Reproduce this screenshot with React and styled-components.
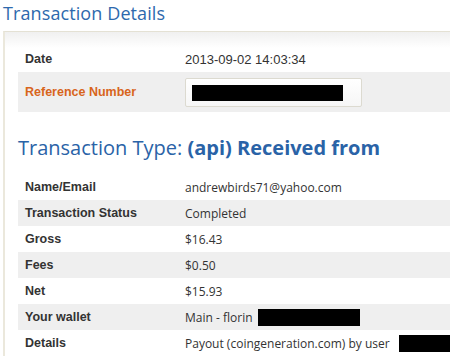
import React from 'react'
import styled, { createGlobalStyle } from 'styled-components'

const GlobalStyle = createGlobalStyle`
    html, body { margin: 0; padding: 0; background: #fff; overflow: hidden; }
    body { width: 450px; height: 357px; }
`
const Page = styled.div`
    width: 450px;
    height: 357px;
    overflow: hidden;
    padding: 0 0 0 3px;
    box-sizing: border-box;
`
const Title = styled.h1`
    margin: 0;
    height: 31px;
    font-family: "Open Sans", sans-serif;
    font-weight: 400;
    font-size: 18px;
    line-height: 26px;
    color: #2d69ad;
    letter-spacing: 0.1px;
`
const Panel = styled.div`
    width: 520px;
    border-top: 1px solid #e4e1d4;
    border-left: 2px solid #ebe8dc;
    background: linear-gradient(#f0f0f0, #ffffff 16px);
    padding: 14px 0 0 13px;
    box-sizing: border-box;
`
const Table = styled.div`
    display: flex;
    flex-direction: column;
`
const Row = styled.div`
    display: grid;
    grid-template-columns: 160px 1fr;
    align-items: center;
    height: ${p => p.tall ? 40 : 26}px;
    padding-left: 7px;
    background: ${p => p.shade ? '#efefef' : 'transparent'};
`
const Label = styled.div`
    font-family: "Liberation Sans", Arial, sans-serif;
    font-weight: bold;
    font-size: 12.5px;
    color: ${p => p.accent ? '#d8651c' : '#333'};
`
const Value = styled.div`
    font-family: ${p => p.plain ? '"Liberation Sans", Arial' : '"Open Sans"'}, sans-serif;
    font-size: ${p => p.plain ? 13 : 12}px;
    color: #333;
    white-space: nowrap;
    display: flex;
    align-items: center;
`
const InputBox = styled.div`
    width: 177px;
    height: 29px;
    box-sizing: border-box;
    border: 1px solid #dcdad0;
    background: linear-gradient(#ffffff, #f6f6f6);
    border-radius: 2px;
    padding: 6px 0 0 6px;
`
const Redact = styled.span`
    display: inline-block;
    background: #000;
    width: ${p => p.w}px;
    height: ${p => p.h}px;
    margin-left: ${p => p.shift || 0}px;
`
const Heading = styled.h2`
    margin: 0;
    padding: 22px 0 0 0;
    height: 62px;
    box-sizing: border-box;
    font-family: "Open Sans", sans-serif;
    font-weight: 400;
    font-size: 20px;
    line-height: 28px;
    color: #2a63a7;
    & b { font-weight: 700; }
`

const rows = [
    ['Name/Email', 'andrewbirds71@yahoo.com'],
    ['Transaction Status', 'Completed'],
    ['Gross', '$16.43'],
    ['Fees', '$0.50'],
    ['Net', '$15.93'],
]

const App = () => {
    return (
        <Page>
            <GlobalStyle />
            <Title>Transaction Details</Title>
            <Panel>
                <Table>
                    <Row>
                        <Label>Date</Label>
                        <Value plain>2013-09-02 14:03:34</Value>
                    </Row>
                    <Row tall shade>
                        <Label accent>Reference Number</Label>
                        <InputBox><Redact w={151} h={16} /></InputBox>
                    </Row>
                </Table>
                <Heading>Transaction Type: <b>(api) Received from</b></Heading>
                <Table>
                    {rows.map((r, i) => (
                        <Row key={r[0]} shade={i % 2 === 1}>
                            <Label>{r[0]}</Label>
                            <Value>{r[1]}</Value>
                        </Row>
                    ))}
                    <Row shade>
                        <Label>Your wallet</Label>
                        <Value>Main - florin<Redact w={102} h={17} shift={5} /></Value>
                    </Row>
                    <Row>
                        <Label>Details</Label>
                        <Value>Payout (coingeneration.com) by user<Redact w={60} h={17} shift={9} /></Value>
                    </Row>
                </Table>
            </Panel>
        </Page>
    )
}
export default App
